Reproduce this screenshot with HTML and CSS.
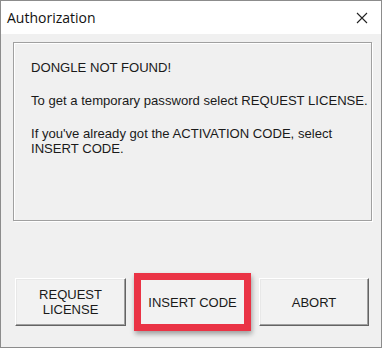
FILE: index.html
```html
<!DOCTYPE html>
<html>
<head>
<meta charset="utf-8">
<link rel="stylesheet" href="styles.css">
</head>
<body>
<div class="window">
  <div class="titlebar">
    <span class="title">Authorization</span>
    <svg class="close" width="12" height="12" viewBox="0 0 12 12"><path d="M1 1 L11 11 M11 1 L1 11" stroke="#222" stroke-width="1.1" fill="none"/></svg>
  </div>
  <div class="client">
    <div class="group">
      <p>DONGLE NOT FOUND!</p>
      <p>To get a temporary password select REQUEST LICENSE.</p>
      <p>If you've already got the ACTIVATION CODE, select<br>INSERT CODE.</p>
    </div>
    <div class="buttons">
      <div class="btn btn-request">REQUEST<br>LICENSE</div>
      <div class="btn btn-insert">INSERT CODE</div>
      <div class="btn btn-abort">ABORT</div>
    </div>
  </div>
</div>
</body>
</html>
```
FILE: styles.css
```css
html, body {
  margin: 0;
  padding: 0;
  background: #ffffff;
}
.window {
  width: 382px;
  height: 348px;
  box-sizing: border-box;
  border: 1px solid #8c8c8c;
  background: #f0f0f0;
  display: flex;
  flex-direction: column;
  font-family: "Liberation Sans", Arial, sans-serif;
}
.titlebar {
  height: 33px;
  background: #ffffff;
  display: flex;
  align-items: center;
  justify-content: space-between;
  padding: 0 13px 0 6px;
  flex: none;
}
.title {
  font-family: "Open Sans", "Noto Sans", sans-serif;
  font-size: 14px;
  color: #111;
}
.close {
  display: block;
}
.client {
  flex: 1;
  display: flex;
  flex-direction: column;
  padding: 8px 9px 0 12px;
}
.group {
  height: 179px;
  box-sizing: border-box;
  flex: none;
  border: 1px solid #a0a0a0;
  box-shadow: inset 1px 1px #ffffff, 1px 1px #ffffff;
  padding: 17px 0 0 17px;
}
.group p {
  margin: 0 0 18px 0;
  font-size: 13.1px;
  line-height: 15px;
  color: #1a1a1a;
}
.buttons {
  display: flex;
  gap: 13px;
  margin-top: 57px;
  padding-left: 2px;
}
.btn {
  height: 48px;
  box-sizing: border-box;
  display: flex;
  align-items: center;
  justify-content: center;
  text-align: center;
  font-size: 13px;
  line-height: 15px;
  color: #1a1a1a;
  background: #f2f2f2;
  border: 1px solid;
  border-color: #ffffff #646464 #646464 #ffffff;
  box-shadow: inset -1px -1px #a0a0a0, inset 1px 1px #e8e8e8;
}
.btn-request { width: 111px; }
.btn-insert { width: 107px; position: relative; }
.btn-abort { width: 110px; }
.btn-insert::after {
  content: "";
  position: absolute;
  left: -6px;
  top: -6px;
  right: -6px;
  bottom: -6px;
  border: 7px solid #ea3345;
  box-shadow: 1px 3px 5px rgba(0,0,0,0.35);
}
```
